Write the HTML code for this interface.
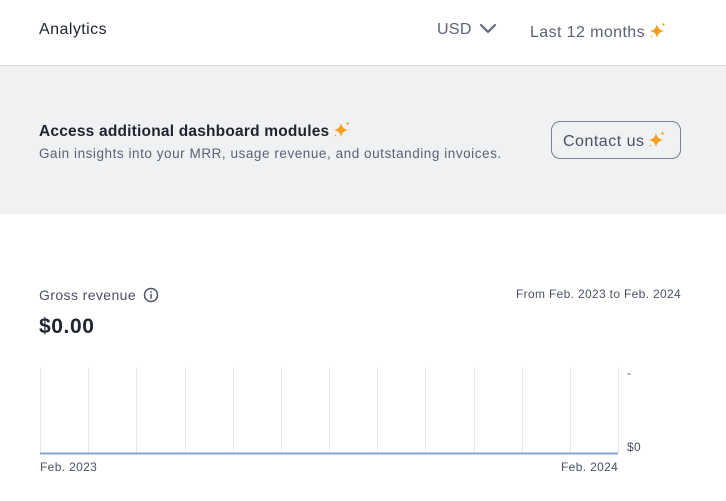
<!DOCTYPE html>
<html><head><meta charset="utf-8"><style>
*{margin:0;padding:0;box-sizing:border-box}
body{width:726px;height:501px;overflow:hidden;background:#fff;font-family:"Liberation Sans",sans-serif;color:#1f2430;position:relative}
.a{position:absolute;white-space:nowrap}
.sp{display:inline-block;vertical-align:-2px;margin-left:4px}
</style></head><body>
<div class="a" style="left:39px;top:21px;font-size:16px;color:#1f2430;letter-spacing:0.45px">Analytics</div>
<div class="a" style="left:437px;top:21px;font-size:16px;color:#5b6275;letter-spacing:0.3px">USD <svg width="18" height="12" viewBox="0 0 18 12" style="margin-left:3px;vertical-align:0"><path d="M2 3l7 7 7-7" fill="none" stroke="#5b6275" stroke-width="2" stroke-linecap="round"/></svg></div>
<div class="a" style="left:530px;top:21px;font-size:16px;color:#5b6275;letter-spacing:0.4px">Last 12 months<svg class="sp" width="18" height="18" viewBox="0 0 18 18"><path d="M8 3Q9 9 15 10Q9 11 8 17Q7 11 1 10Q7 9 8 3Z" fill="#f59e1b"/><circle cx="14.5" cy="3.5" r="1.2" fill="#f59e1b"/><circle cx="2.5" cy="15.5" r="0.8" fill="#f59e1b"/></svg></div>
<div class="a" style="left:0;top:65px;width:726px;height:149px;background:#f0f1f3;border-top:1px solid #dadce0"></div>
<div class="a" style="left:39px;top:120px;font-size:15.5px;font-weight:bold;color:#1f2430;letter-spacing:0.2px">Access additional dashboard modules<svg class="sp" width="18" height="18" viewBox="0 0 18 18"><path d="M8 3Q9 9 15 10Q9 11 8 17Q7 11 1 10Q7 9 8 3Z" fill="#f59e1b"/><circle cx="14.5" cy="3.5" r="1.2" fill="#f59e1b"/><circle cx="2.5" cy="15.5" r="0.8" fill="#f59e1b"/></svg></div>
<div class="a" style="left:39px;top:146px;font-size:13.5px;color:#5b6275;letter-spacing:0.55px">Gain insights into your MRR, usage revenue, and outstanding invoices.</div>
<div class="a" style="left:551px;top:121px;width:130px;height:38px;border:1px solid #7c8292;border-radius:9px;font-size:16px;color:#4a5165;padding:8px 0 0 11px;letter-spacing:0.5px">Contact us<svg class="sp" width="18" height="18" viewBox="0 0 18 18"><path d="M8 3Q9 9 15 10Q9 11 8 17Q7 11 1 10Q7 9 8 3Z" fill="#f59e1b"/><circle cx="14.5" cy="3.5" r="1.2" fill="#f59e1b"/><circle cx="2.5" cy="15.5" r="0.8" fill="#f59e1b"/></svg></div>
<div class="a" style="left:39px;top:287px;font-size:14px;color:#4a5165;letter-spacing:0.4px">Gross revenue <svg width="16" height="16" viewBox="0 0 16 16" style="vertical-align:-3px;margin-left:3px"><circle cx="8" cy="8" r="6.5" fill="none" stroke="#4a5165" stroke-width="1.5"/><rect x="7.3" y="7" width="1.5" height="4.5" fill="#4a5165"/><circle cx="8" cy="5" r="0.9" fill="#4a5165"/></svg></div>
<div class="a" style="left:516px;top:287px;font-size:12px;color:#4a5165;letter-spacing:0.33px">From Feb. 2023 to Feb. 2024</div>
<div class="a" style="left:39px;top:315px;font-size:21px;font-weight:bold;color:#1f2430;letter-spacing:0.6px">$0.00</div>
<svg class="a" style="left:0;top:0" width="726" height="501">
<g stroke="#e5e7eb" stroke-width="1">
<line x1="40.5" y1="367" x2="40.5" y2="453"/><line x1="88.5" y1="367" x2="88.5" y2="453"/><line x1="136.5" y1="367" x2="136.5" y2="453"/><line x1="185.5" y1="367" x2="185.5" y2="453"/><line x1="233.5" y1="367" x2="233.5" y2="453"/><line x1="281.5" y1="367" x2="281.5" y2="453"/><line x1="329.5" y1="367" x2="329.5" y2="453"/><line x1="377.5" y1="367" x2="377.5" y2="453"/><line x1="425.5" y1="367" x2="425.5" y2="453"/><line x1="474.5" y1="367" x2="474.5" y2="453"/><line x1="522.5" y1="367" x2="522.5" y2="453"/><line x1="570.5" y1="367" x2="570.5" y2="453"/><line x1="618.5" y1="367" x2="618.5" y2="453"/>
</g>
<line x1="40" y1="453.5" x2="618" y2="453.5" stroke="#8b9fd4" stroke-width="2"/>
</svg>
<div class="a" style="left:627px;top:366px;font-size:12px;color:#4a5165">-</div>
<div class="a" style="left:627px;top:440px;font-size:12px;color:#4a5165;letter-spacing:0.3px">$0</div>
<div class="a" style="left:40px;top:460px;font-size:12px;color:#4a5165;letter-spacing:0.35px">Feb. 2023</div>
<div class="a" style="left:561px;top:460px;font-size:12px;color:#4a5165;letter-spacing:0.35px">Feb. 2024</div>
</body></html>
